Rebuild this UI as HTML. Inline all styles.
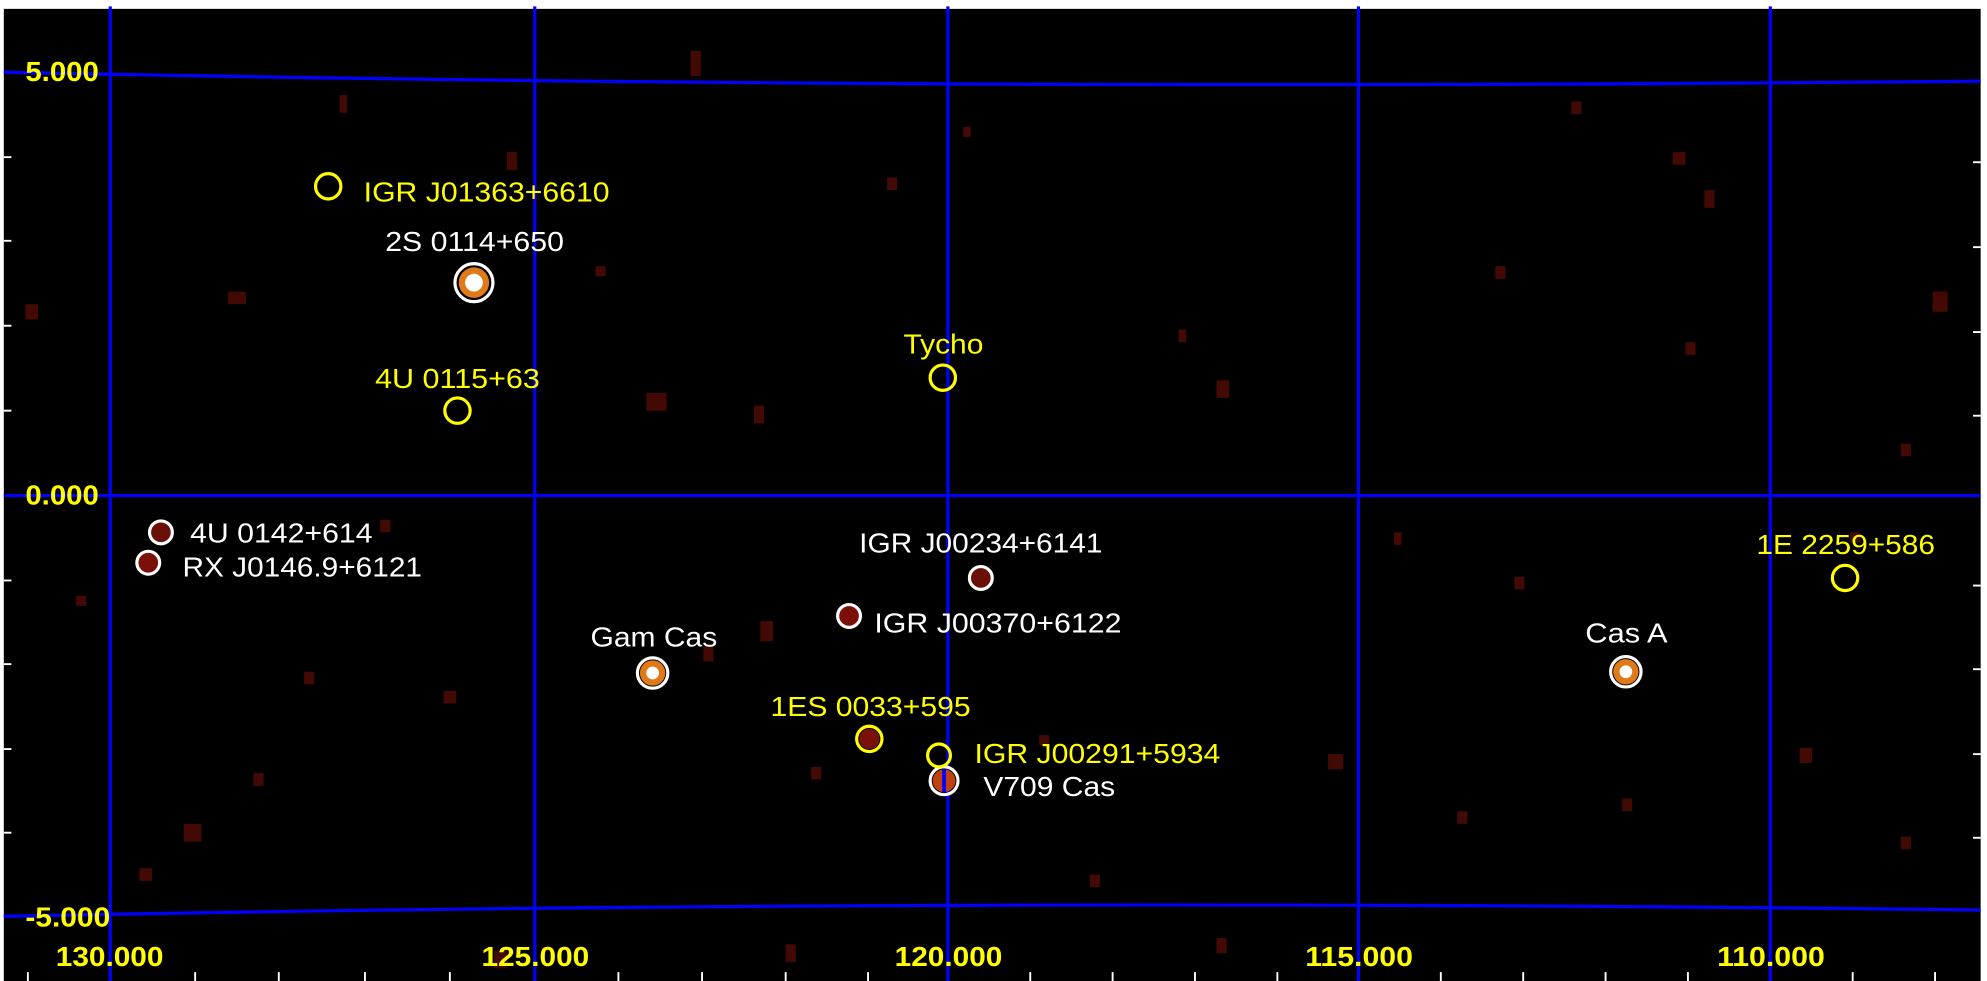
<!DOCTYPE html>
<html><head><style>html,body{margin:0;padding:0;background:#fff;overflow:hidden}svg{display:block}</style></head><body>
<svg width="1987" height="981" viewBox="0 0 1568 774" preserveAspectRatio="none" xmlns="http://www.w3.org/2000/svg" font-family="Liberation Sans, sans-serif">
<rect width="1568" height="774" fill="#fff"/>
<rect x="3" y="7" width="1560" height="767" fill="#000"/>
<g fill="#5a0c06" opacity="0.75">
<rect x="545" y="40" width="8" height="20"/><rect x="268" y="75" width="6" height="14"/><rect x="180" y="230" width="14" height="10"/><rect x="510" y="310" width="16" height="14"/><rect x="595" y="320" width="8" height="14"/><rect x="20" y="240" width="10" height="12"/><rect x="1345" y="150" width="8" height="14"/><rect x="1320" y="120" width="10" height="10"/><rect x="1525" y="230" width="12" height="16"/><rect x="960" y="300" width="10" height="14"/><rect x="145" y="650" width="14" height="14"/><rect x="110" y="685" width="10" height="10"/><rect x="1048" y="595" width="12" height="12"/><rect x="600" y="490" width="10" height="16"/><rect x="555" y="510" width="8" height="12"/><rect x="350" y="545" width="10" height="10"/><rect x="640" y="605" width="8" height="10"/><rect x="1420" y="590" width="10" height="12"/><rect x="1195" y="455" width="8" height="10"/><rect x="820" y="580" width="8" height="8"/><rect x="1100" y="420" width="6" height="10"/><rect x="1330" y="270" width="8" height="10"/><rect x="400" y="120" width="8" height="14"/><rect x="470" y="210" width="8" height="8"/><rect x="700" y="140" width="8" height="10"/><rect x="930" y="260" width="6" height="10"/><rect x="1500" y="350" width="8" height="10"/><rect x="1280" y="630" width="8" height="10"/><rect x="200" y="610" width="8" height="10"/><rect x="60" y="470" width="8" height="8"/><rect x="860" y="690" width="8" height="10"/><rect x="1240" y="80" width="8" height="10"/><rect x="1460" y="420" width="8" height="8"/><rect x="1180" y="210" width="8" height="10"/><rect x="300" y="410" width="8" height="10"/><rect x="760" y="100" width="6" height="8"/><rect x="390" y="750" width="10" height="14"/><rect x="620" y="745" width="8" height="14"/><rect x="960" y="740" width="8" height="12"/><rect x="1500" y="660" width="8" height="10"/><rect x="240" y="530" width="8" height="10"/><rect x="1150" y="640" width="8" height="10"/>
</g>
<g stroke="#00f" stroke-width="2.5" fill="none">
<line x1="87" y1="5" x2="87" y2="774"/><line x1="422" y1="5" x2="422" y2="774"/><line x1="748" y1="5" x2="748" y2="774"/><line x1="1072" y1="5" x2="1072" y2="774"/><line x1="1397" y1="5" x2="1397" y2="774"/>
<line x1="3" y1="391" x2="1563" y2="391"/>
<path d="M3 57 Q748 72 1563 64"/>
<path d="M3 723 Q748 708 1563 718"/>
</g>
<g stroke="#fff" stroke-width="1.5">
<line x1="3" y1="124" x2="9" y2="124"/><line x1="3" y1="190" x2="9" y2="190"/><line x1="3" y1="257" x2="9" y2="257"/><line x1="3" y1="324" x2="9" y2="324"/><line x1="3" y1="458" x2="9" y2="458"/><line x1="3" y1="524" x2="9" y2="524"/><line x1="3" y1="591" x2="9" y2="591"/><line x1="3" y1="657" x2="9" y2="657"/>
<line x1="1557" y1="128" x2="1563" y2="128"/><line x1="1557" y1="195" x2="1563" y2="195"/><line x1="1557" y1="262" x2="1563" y2="262"/><line x1="1557" y1="328" x2="1563" y2="328"/><line x1="1557" y1="462" x2="1563" y2="462"/><line x1="1557" y1="528" x2="1563" y2="528"/><line x1="1557" y1="595" x2="1563" y2="595"/><line x1="1557" y1="661" x2="1563" y2="661"/>
<line x1="22" y1="767" x2="22" y2="774"/><line x1="154" y1="767" x2="154" y2="774"/><line x1="220" y1="767" x2="220" y2="774"/><line x1="288" y1="767" x2="288" y2="774"/><line x1="355" y1="767" x2="355" y2="774"/><line x1="488" y1="767" x2="488" y2="774"/><line x1="554" y1="767" x2="554" y2="774"/><line x1="620" y1="767" x2="620" y2="774"/><line x1="685" y1="767" x2="685" y2="774"/><line x1="813" y1="767" x2="813" y2="774"/><line x1="878" y1="767" x2="878" y2="774"/><line x1="943" y1="767" x2="943" y2="774"/><line x1="1008" y1="767" x2="1008" y2="774"/><line x1="1137" y1="767" x2="1137" y2="774"/><line x1="1202" y1="767" x2="1202" y2="774"/><line x1="1267" y1="767" x2="1267" y2="774"/><line x1="1332" y1="767" x2="1332" y2="774"/><line x1="1462" y1="767" x2="1462" y2="774"/><line x1="1527" y1="767" x2="1527" y2="774"/>
</g>
<g fill="#ffff00" font-weight="bold" font-size="22">
<text x="20" y="64" textLength="58" lengthAdjust="spacingAndGlyphs">5.000</text><text x="20" y="398" textLength="58" lengthAdjust="spacingAndGlyphs">0.000</text><text x="20" y="731" textLength="67" lengthAdjust="spacingAndGlyphs">-5.000</text>
<text x="44" y="762" textLength="85" lengthAdjust="spacingAndGlyphs">130.000</text><text x="380" y="762" textLength="85" lengthAdjust="spacingAndGlyphs">125.000</text><text x="706" y="762" textLength="85" lengthAdjust="spacingAndGlyphs">120.000</text><text x="1030" y="762" textLength="85" lengthAdjust="spacingAndGlyphs">115.000</text><text x="1355" y="762" textLength="85" lengthAdjust="spacingAndGlyphs">110.000</text>
</g>
<g>
<circle cx="374" cy="223" r="12" fill="#e07a18"/><circle cx="374" cy="223" r="7" fill="#fff"/>
<circle cx="515" cy="531" r="10" fill="#e07a18"/><circle cx="515" cy="531" r="5" fill="#fff"/>
<circle cx="1283" cy="530" r="10" fill="#e07a18"/><circle cx="1283" cy="530" r="5" fill="#fff"/>
<circle cx="745" cy="616" r="9" fill="#c04010"/><line x1="745" y1="607" x2="745" y2="625" stroke="#00f" stroke-width="3"/>
<circle cx="127" cy="420" r="8" fill="#6a1008"/><circle cx="117" cy="444" r="8" fill="#7a1008"/><circle cx="774" cy="456" r="8" fill="#6a1008"/><circle cx="670" cy="486" r="8" fill="#7a1008"/><circle cx="686" cy="583" r="8" fill="#7a1008"/>
</g>
<g fill="none" stroke="#fff" stroke-width="2.5">
<circle cx="374" cy="223" r="15"/><circle cx="127" cy="420" r="9"/><circle cx="117" cy="444" r="9"/><circle cx="774" cy="456" r="9"/><circle cx="670" cy="486" r="9"/><circle cx="515" cy="531" r="12"/><circle cx="1283" cy="530" r="12"/><circle cx="745" cy="616" r="11"/>
</g>
<g fill="none" stroke="#ffff00" stroke-width="2.5">
<circle cx="259" cy="147" r="10"/><circle cx="361" cy="324" r="10"/><circle cx="744" cy="298" r="10"/><circle cx="1456" cy="456" r="10"/><circle cx="686" cy="583" r="10"/><circle cx="741" cy="596" r="9"/>
</g>
<g font-size="22" fill="#ffff00" lengthAdjust="spacingAndGlyphs">
<text x="287" y="159" textLength="194" lengthAdjust="spacingAndGlyphs">IGR J01363+6610</text>
<text x="296" y="306" textLength="130" lengthAdjust="spacingAndGlyphs">4U 0115+63</text>
<text x="713" y="279" textLength="63" lengthAdjust="spacingAndGlyphs">Tycho</text>
<text x="1386" y="437" textLength="141" lengthAdjust="spacingAndGlyphs">1E 2259+586</text>
<text x="608" y="565" textLength="158" lengthAdjust="spacingAndGlyphs">1ES 0033+595</text>
<text x="769" y="602" textLength="194" lengthAdjust="spacingAndGlyphs">IGR J00291+5934</text>
</g>
<g font-size="22" fill="#fff">
<text x="304" y="198" textLength="141" lengthAdjust="spacingAndGlyphs">2S 0114+650</text>
<text x="150" y="428" textLength="144" lengthAdjust="spacingAndGlyphs">4U 0142+614</text>
<text x="144" y="455" textLength="189" lengthAdjust="spacingAndGlyphs">RX J0146.9+6121</text>
<text x="678" y="436" textLength="192" lengthAdjust="spacingAndGlyphs">IGR J00234+6141</text>
<text x="690" y="499" textLength="195" lengthAdjust="spacingAndGlyphs">IGR J00370+6122</text>
<text x="466" y="510" textLength="100" lengthAdjust="spacingAndGlyphs">Gam Cas</text>
<text x="1251" y="507" textLength="65" lengthAdjust="spacingAndGlyphs">Cas A</text>
<text x="776" y="628" textLength="104" lengthAdjust="spacingAndGlyphs">V709 Cas</text>
</g>
</svg>
</body></html>
